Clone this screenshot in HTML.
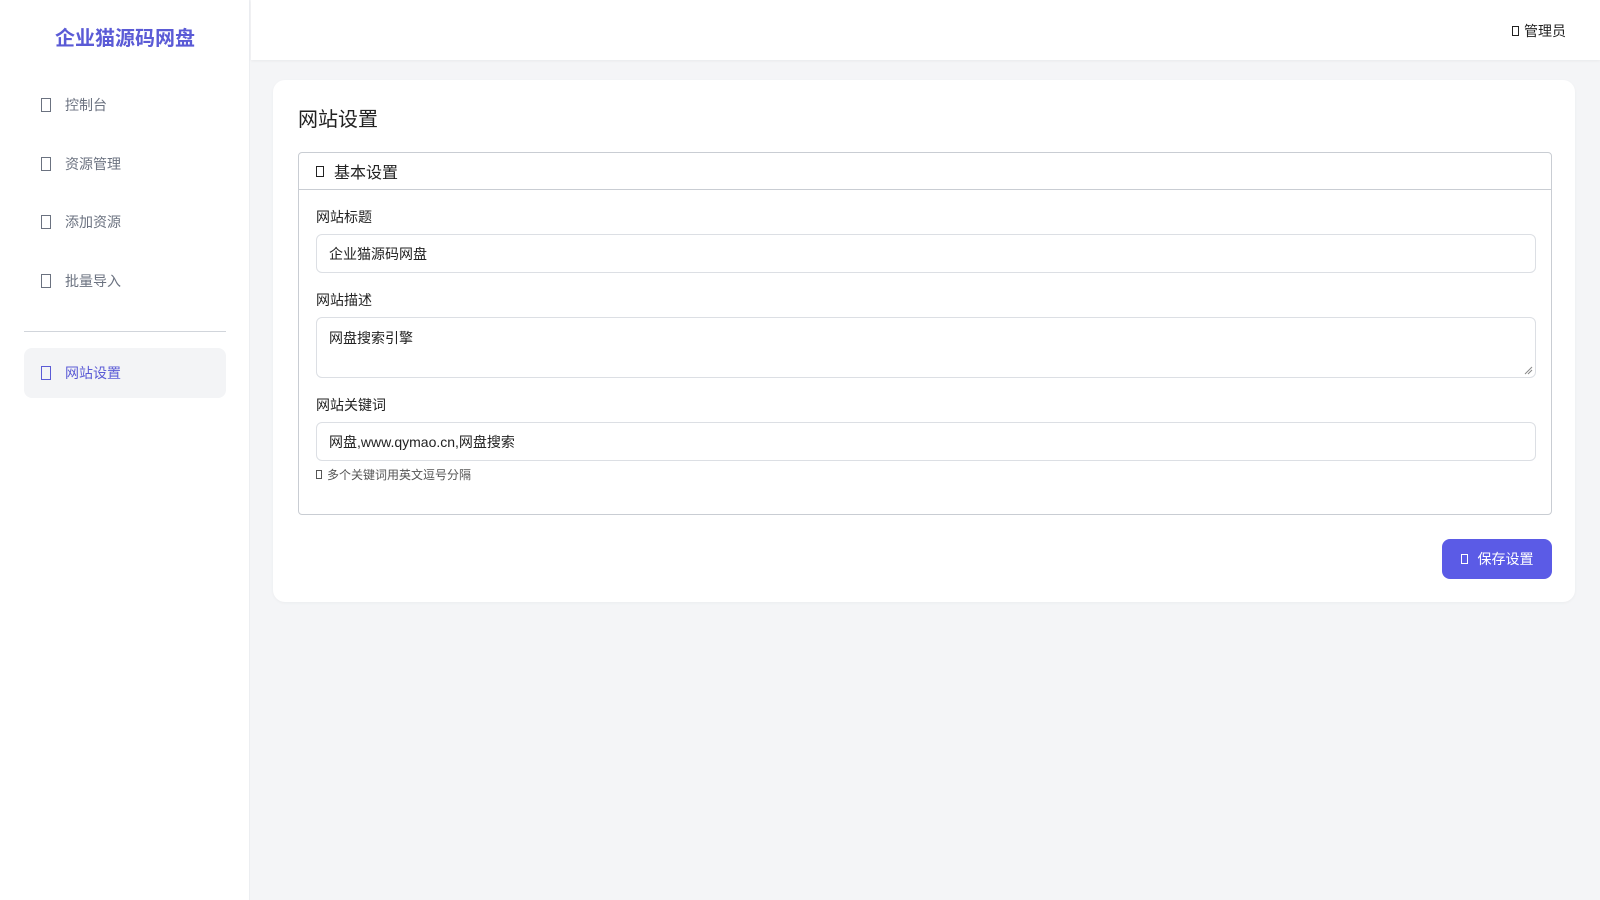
<!DOCTYPE html>
<html><head><meta charset="utf-8"><style>
*{box-sizing:border-box;margin:0;padding:0}
body{width:1600px;height:900px;background:#f4f5f7;font-family:"Liberation Sans","Noto Sans CJK SC",sans-serif;color:#222;position:relative;overflow:hidden}
.side{position:absolute;left:0;top:0;width:250px;height:900px;background:#fff;border-right:1px solid #eceef1}
.logo{position:absolute;left:0;width:250px;top:22px;text-align:center;font-size:20px;font-weight:bold;color:#5b5bd6}
.mi{position:absolute;left:24px;width:202px;height:50px;font-size:14px;color:#6b7280;display:flex;align-items:center;padding-left:17px}
.ic{display:inline-block;width:10px;height:14px;border:1.4px solid currentColor;margin-right:14px}
.mi.act{background:#f3f4f6;border-radius:8px;color:#5b5bd6}
.hr{position:absolute;left:24px;width:202px;top:331px;border-top:1px solid #d1d5db}
.top{position:absolute;left:251px;top:0;right:0;height:60px;background:#fff;box-shadow:0 1px 3px rgba(0,0,0,.05)}
.admin{position:absolute;right:34px;top:21px;font-size:14px;color:#222;display:flex;align-items:center}
.admin .ic{width:7px;height:10px;margin-right:5px;border-width:1.2px}
.card{position:absolute;left:273px;top:80px;width:1302px;height:522px;background:#fff;border-radius:12px;box-shadow:0 1px 3px rgba(0,0,0,.04)}
h1{position:absolute;left:298px;top:103px;font-size:20px;font-weight:normal}
.fs{position:absolute;left:298px;top:152px;width:1254px;height:363px;border:1px solid #c9cdd3;border-radius:4px}
.lg{height:37px;border-bottom:1px solid #c9cdd3;display:flex;align-items:center;padding-left:17px;font-size:16px}
.lg .ic{width:8px;height:11px;margin-right:10px}
.lb{position:absolute;left:17px;font-size:14px;top:0}
.in{position:absolute;left:17px;width:1220px;border:1px solid #dcdfe4;border-radius:6px;font-size:14px;padding-left:12px;display:flex;align-items:center}
.hint{position:absolute;left:17px;top:313px;font-size:12px;color:#555;display:flex;align-items:center}
.hint .ic{width:6px;height:9px;margin-right:5px;border-width:1px}
.btn{position:absolute;left:1442px;top:539px;width:110px;height:40px;background:#5b5be6;border-radius:8px;color:#fff;font-size:14px;display:flex;align-items:center;justify-content:center}
.btn .ic{width:7px;height:10px;margin-right:10px;border-width:1.3px}
.rz{position:absolute;right:2px;bottom:2px}
</style></head><body>
<div class="side">
<div class="logo">企业猫源码网盘</div>
<div class="mi" style="top:80px"><span class="ic"></span>控制台</div>
<div class="mi" style="top:139px"><span class="ic"></span>资源管理</div>
<div class="mi" style="top:197px"><span class="ic"></span>添加资源</div>
<div class="mi" style="top:256px"><span class="ic"></span>批量导入</div>
<div class="hr"></div>
<div class="mi act" style="top:348px"><span class="ic"></span>网站设置</div>
</div>
<div class="top"><div class="admin"><span class="ic"></span>管理员</div></div>
<div class="card"></div>
<h1>网站设置</h1>
<div class="fs">
<div class="lg"><span class="ic"></span>基本设置</div>
<div class="lb" style="top:54px">网站标题</div>
<div class="in" style="top:81px;height:39px">企业猫源码网盘</div>
<div class="lb" style="top:137px">网站描述</div>
<div class="in" style="top:164px;height:61px;align-items:flex-start;padding-top:10px">网盘搜索引擎<svg class="rz" width="9" height="9"><path d="M1 8L8 1M4 8L8 4" stroke="#888" stroke-width="1"/></svg></div>
<div class="lb" style="top:242px">网站关键词</div>
<div class="in" style="top:269px;height:39px">网盘,www.qymao.cn,网盘搜索</div>
<div class="hint"><span class="ic"></span>多个关键词用英文逗号分隔</div>
</div>
<div class="btn"><span class="ic"></span>保存设置</div>
</body></html>
